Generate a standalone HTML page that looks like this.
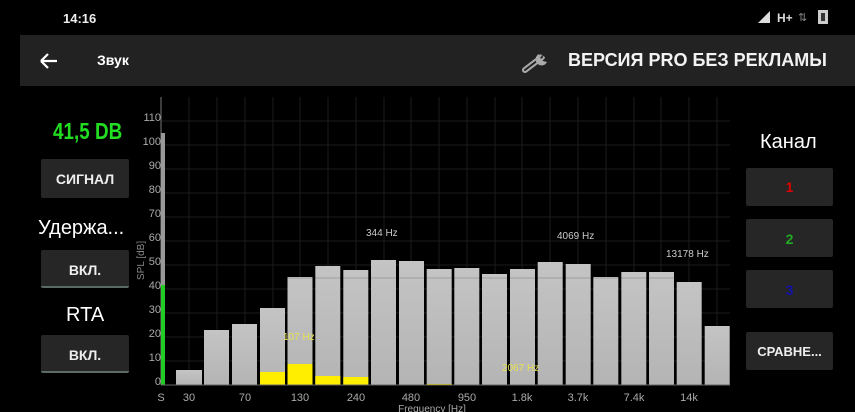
<!DOCTYPE html>
<html><head><meta charset="utf-8"><style>
html,body{margin:0;padding:0;background:#000;width:855px;height:412px;overflow:hidden;font-family:"Liberation Sans",sans-serif;color:#fff;position:relative}
.a{position:absolute}
.btn{position:absolute;background:#262626;border-radius:2px;text-align:center;font-size:14px;font-weight:bold;color:#eee}
</style></head><body>
<div class="a" style="left:63px;top:11px;font-size:13px;font-weight:bold;color:#eee">14:16</div>
<svg class="a" style="left:756px;top:10px" width="16" height="14"><polygon points="2,13 14,13 14,1" fill="#ddd"/></svg>
<div class="a" style="left:777px;top:11px;font-size:12px;font-weight:bold;color:#ddd">H+</div>
<div class="a" style="left:798px;top:11px;font-size:11px;color:#888">⇅</div>
<div class="a" style="left:818px;top:10px;width:10px;height:14px;background:#ccc"><div style="position:absolute;left:3px;top:3px;width:4px;height:8px;background:#333"></div></div>
<div class="a" style="left:20px;top:35px;width:835px;height:51px;background:#222"></div>
<svg class="a" style="left:38px;top:51px" width="22" height="20"><path d="M3 10H19M3 10L10 3M3 10L10 17" stroke="#fff" stroke-width="2.2" fill="none"/></svg>
<div class="a" style="left:97px;top:52px;font-size:14px;font-weight:bold">Звук</div>
<svg class="a" style="left:518px;top:47px" width="34" height="28"><path d="M7 23L24 10" stroke="#aaa" stroke-width="6" stroke-linecap="round"/><path d="M7 23L24 10" stroke="#222" stroke-width="2" stroke-linecap="round"/><path d="M21 7a6 6 0 1 0 8 8l-4-1-2-2z" fill="#aaa"/><path d="M27 3l3 3-3 4-4-2z" fill="#222"/></svg>
<div class="a" style="left:568px;top:50px;font-size:18px;font-weight:bold;color:#f2f2f2">ВЕРСИЯ PRO БЕЗ РЕКЛАМЫ</div>

<div class="a" style="left:53px;top:118px;font-size:23px;font-weight:bold;color:#22dd22;font-family:'Liberation Sans',sans-serif;transform:scaleX(.82);transform-origin:left;letter-spacing:0px">41,5 DB</div>
<div class="btn" style="left:41px;top:159px;width:88px;height:39px;line-height:41px">СИГНАЛ</div>
<div class="a" style="left:38px;top:217px;font-size:20px">Удержа...</div>
<div class="btn" style="left:41px;top:250px;width:88px;height:36px;line-height:40px;border-bottom:2px solid #5a6a66">ВКЛ.</div>
<div class="a" style="left:66px;top:304px;font-size:20px">RTA</div>
<div class="btn" style="left:41px;top:335px;width:88px;height:36px;line-height:40px;border-bottom:2px solid #5a6a66">ВКЛ.</div>

<div class="a" style="left:760px;top:131px;font-size:20px">Канал</div>
<div class="btn" style="left:746px;top:168px;width:87px;height:38px;line-height:38px;color:#d00">1</div>
<div class="btn" style="left:746px;top:219px;width:87px;height:38px;line-height:40px;color:#2a2">2</div>
<div class="btn" style="left:746px;top:270px;width:87px;height:38px;line-height:40px;color:#11a">3</div>
<div class="btn" style="left:746px;top:332px;width:87px;height:38px;line-height:40px;font-size:13px">СРАВНЕ...</div>

<svg class="a" style="left:0;top:0" width="855" height="412" font-family="Liberation Sans, sans-serif">
<defs><linearGradient id="g" x1="0" y1="0" x2="0" y2="1"><stop offset="0" stop-color="#c4c4c4"/><stop offset="1" stop-color="#b4b4b4"/></linearGradient></defs>
<g stroke="#1c1c1c" stroke-width="1">
<line x1="161" y1="121" x2="730" y2="121"/><line x1="161" y1="145" x2="730" y2="145"/><line x1="161" y1="169" x2="730" y2="169"/><line x1="161" y1="193" x2="730" y2="193"/><line x1="161" y1="217" x2="730" y2="217"/><line x1="161" y1="241" x2="730" y2="241"/><line x1="161" y1="265" x2="730" y2="265"/><line x1="161" y1="289" x2="730" y2="289"/><line x1="161" y1="313" x2="730" y2="313"/><line x1="161" y1="337" x2="730" y2="337"/><line x1="161" y1="361" x2="730" y2="361"/>
<line x1="189" y1="97" x2="189" y2="385"/><line x1="217" y1="97" x2="217" y2="385"/><line x1="245" y1="97" x2="245" y2="385"/><line x1="273" y1="97" x2="273" y2="385"/><line x1="300" y1="97" x2="300" y2="385"/><line x1="328" y1="97" x2="328" y2="385"/><line x1="356" y1="97" x2="356" y2="385"/><line x1="384" y1="97" x2="384" y2="385"/><line x1="411" y1="97" x2="411" y2="385"/><line x1="439" y1="97" x2="439" y2="385"/><line x1="467" y1="97" x2="467" y2="385"/><line x1="495" y1="97" x2="495" y2="385"/><line x1="522" y1="97" x2="522" y2="385"/><line x1="550" y1="97" x2="550" y2="385"/><line x1="578" y1="97" x2="578" y2="385"/><line x1="606" y1="97" x2="606" y2="385"/><line x1="634" y1="97" x2="634" y2="385"/><line x1="661" y1="97" x2="661" y2="385"/><line x1="689" y1="97" x2="689" y2="385"/><line x1="717" y1="97" x2="717" y2="385"/>
</g>
<line x1="161" y1="97" x2="161" y2="385" stroke="#777"/>
<g fill="url(#g)">
<rect x="176" y="370" width="26" height="15"/><rect x="204" y="330" width="25" height="55"/><rect x="232" y="324" width="25" height="61"/><rect x="260" y="308" width="25" height="77"/>
<rect x="287.5" y="277" width="25" height="108"/><rect x="315.3" y="266" width="25" height="119"/><rect x="343.3" y="270" width="25" height="115"/><rect x="371" y="260" width="25" height="125"/><rect x="399" y="261" width="25" height="124"/><rect x="426.7" y="269" width="25" height="116"/><rect x="454.3" y="268" width="25" height="117"/><rect x="482" y="274" width="25" height="111"/><rect x="510" y="269" width="25" height="116"/><rect x="537.7" y="262" width="25" height="123"/><rect x="565.7" y="264" width="25" height="121"/><rect x="593.3" y="277" width="25" height="108"/><rect x="621.3" y="272" width="25" height="113"/><rect x="649" y="272" width="25" height="113"/><rect x="676.7" y="282" width="25" height="103"/><rect x="704.7" y="326" width="25" height="59"/>
</g>
<line x1="161" y1="278" x2="730" y2="278" stroke="#000" stroke-opacity=".18"/>
<g fill="#ffee00"><rect x="260" y="372" width="25" height="13"/><rect x="287.5" y="364" width="25" height="21"/><rect x="315.3" y="376" width="25" height="9"/><rect x="343.3" y="377" width="25" height="8"/><rect x="426.7" y="384" width="25" height="1"/></g>
<rect x="161" y="133" width="4" height="152" fill="#999"/><rect x="161" y="285" width="4" height="100" fill="#22cc22"/>
<line x1="161" y1="385" x2="730" y2="385" stroke="#666"/>
<g fill="#aaa" font-size="11" text-anchor="end">
<text x="161" y="121">110</text><text x="161" y="145">100</text><text x="161" y="169">90</text><text x="161" y="193">80</text><text x="161" y="217">70</text><text x="161" y="241">60</text><text x="161" y="265">50</text><text x="161" y="289">40</text><text x="161" y="313">30</text><text x="161" y="337">20</text><text x="161" y="361">10</text><text x="161" y="385">0</text>
</g>
<text x="0" y="0" fill="#888" font-size="10" transform="translate(144,280) rotate(-90)">SPL [dB]</text>
<g fill="#aaa" font-size="11" text-anchor="middle">
<text x="161" y="401">S</text><text x="189" y="401">30</text><text x="245" y="401">70</text><text x="300" y="401">130</text><text x="356" y="401">240</text><text x="411" y="401">480</text><text x="467" y="401">950</text><text x="522" y="401">1.8k</text><text x="578" y="401">3.7k</text><text x="634" y="401">7.4k</text><text x="689" y="401">14k</text>
<text x="432" y="412" font-size="10">Frequency [Hz]</text>
</g>
<g font-size="10" fill="#ccc"><text x="366" y="236">344 Hz</text><text x="557" y="239">4069 Hz</text><text x="666" y="257">13178 Hz</text></g>
<g font-size="10" fill="#e8e050"><text x="283" y="340">107 Hz</text><text x="502" y="371">2067 Hz</text></g>
</svg>
</body></html>
